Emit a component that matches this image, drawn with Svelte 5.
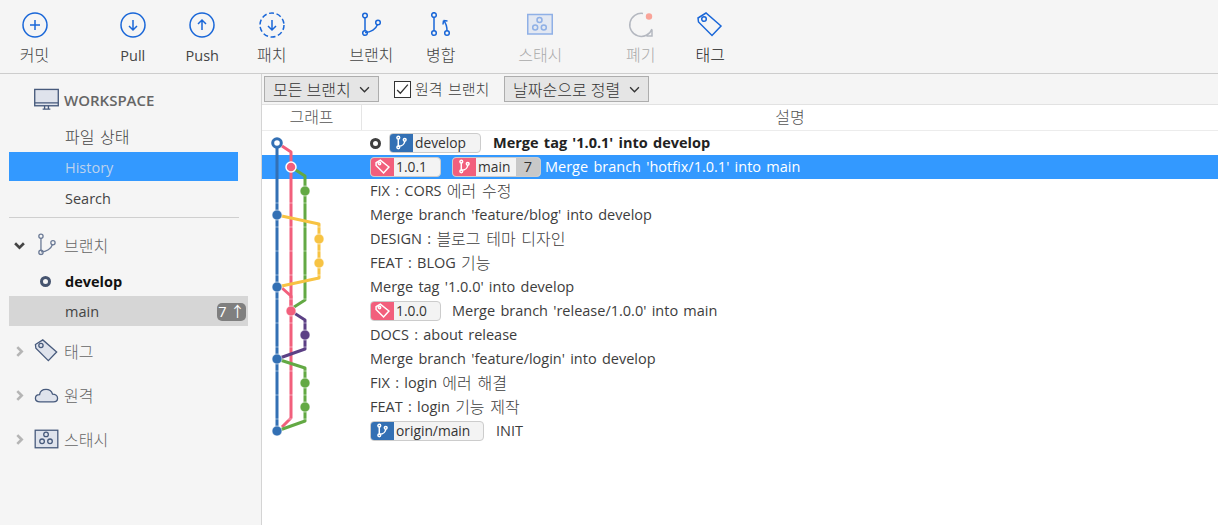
<script>
	// latin and hangul need different sizes to match the original font
	function runs(text) {
		return text.split(/([\uac00-\ud7a3]+(?: [\uac00-\ud7a3]+)*)/).filter(Boolean).map((s) => ({
			s,
			ko: /[\uac00-\ud7a3]/.test(s)
		}));
	}

	const commits = [
		{ head: true, text: "Merge tag '1.0.1' into develop", refs: [{ kind: 'branch', color: 'blue', name: 'develop', width: 92, after: 12 }] },
		{ selected: true, text: "Merge branch 'hotfix/1.0.1' into main", refs: [
			{ kind: 'tag', color: 'red', name: '1.0.1', width: 71, after: 11 },
			{ kind: 'branch', color: 'red', name: 'main', width: 89, count: 7, after: 4 }
		] },
		{ text: 'FIX : CORS 에러 수정' },
		{ text: "Merge branch 'feature/blog' into develop" },
		{ text: 'DESIGN : 블로그 테마 디자인' },
		{ text: 'FEAT : BLOG 기능' },
		{ text: "Merge tag '1.0.0' into develop" },
		{ text: "Merge branch 'release/1.0.0' into main", refs: [{ kind: 'tag', color: 'red', name: '1.0.0', width: 71, after: 11 }] },
		{ text: 'DOCS : about release' },
		{ text: "Merge branch 'feature/login' into develop" },
		{ text: 'FIX : login 에러 해결' },
		{ text: 'FEAT : login 기능 제작' },
		{ text: 'INIT', refs: [{ kind: 'branch', color: 'blue', name: 'origin/main', width: 114, after: 12 }] }
	];

	const lines = [
		{ color: '#3370b4', d: 'M15 12V300' },
		{ color: '#f25f7c', d: 'M20 15L29 21V287L20 296' },
		{ color: '#f25f7c', d: 'M20 157L29 165V180' },
		{ color: '#63a944', d: 'M29 36L43 45V169L29 178' },
		{ color: '#f7c343', d: 'M15 84L57 93V147L15 156' },
		{ color: '#5c4085', d: 'M29 180L43 189V218L15 228' },
		{ color: '#63a944', d: 'M15 228L43 237V290L15 300' }
	];

	const dots = [
		{ x: 29, y: 36, color: '#f25f7c', ring: true },
		{ x: 43, y: 60, color: '#63a944' },
		{ x: 15, y: 84, color: '#3370b4' },
		{ x: 57, y: 108, color: '#f7c343' },
		{ x: 57, y: 132, color: '#f7c343' },
		{ x: 15, y: 156, color: '#3370b4' },
		{ x: 29, y: 180, color: '#f25f7c' },
		{ x: 43, y: 204, color: '#5c4085' },
		{ x: 15, y: 228, color: '#3370b4' },
		{ x: 43, y: 252, color: '#63a944' },
		{ x: 43, y: 276, color: '#63a944' },
		{ x: 15, y: 300, color: '#3370b4' }
	];

	const ticks = [72, 96, 120, 144, 168, 192, 216, 240, 264, 288];
</script>

{#snippet t(text)}{#each runs(text) as run}{#if run.ko}<span class="ko">{run.s}</span>{:else}{run.s}{/if}{/each}{/snippet}

{#snippet branchIcon()}
	<path d="M7 5.5V19M7 20.5C13 20.5 18 17 19.5 12.5" />
	<circle cx="7" cy="3.5" r="2.3" />
	<circle cx="7" cy="21" r="2.3" />
	<circle cx="20" cy="10.5" r="2.3" />
{/snippet}

{#snippet tagIcon()}
	<path d="M1 6L9 1L24 14L15 23.5L1.5 10Z" />
	<circle cx="7" cy="7" r="2.3" />
{/snippet}

{#snippet stashDots()}
	<circle cx="12.5" cy="8" r="2.5" />
	<circle cx="8.2" cy="15.5" r="2.5" />
	<circle cx="16.8" cy="15.5" r="2.5" />
{/snippet}

{#snippet tinyBranch()}
	<svg class="mini" viewBox="0 0 14 14">
		<path d="M4 3V11M4 10.5C8 10.5 10 8 10 5.5" />
		<circle cx="4" cy="2.5" r="1.3" />
		<circle cx="4" cy="11.5" r="1.3" />
		<circle cx="10" cy="4.5" r="1.3" />
	</svg>
{/snippet}

{#snippet tinyTag()}
	<svg class="mini" viewBox="0 0 14 14">
		<path d="M1 3.5L5 1L13 7.5L8 13L1 6Z" />
		<circle cx="4.2" cy="4.2" r="1.1" />
	</svg>
{/snippet}

<div class="app">
	<header class="toolbar">
		<button class="tool first">
			<svg viewBox="0 0 26 26"><circle cx="13" cy="13" r="12" /><path d="M13 8V18M8 13H18" /></svg>
			<span class="ko">커밋</span>
		</button>
		<button class="tool group">
			<svg viewBox="0 0 26 26"><circle cx="13" cy="13" r="12" /><path d="M13 8V18M9 14L13 18L17 14" /></svg>
			<span>Pull</span>
		</button>
		<button class="tool">
			<svg viewBox="0 0 26 26"><circle cx="13" cy="13" r="12" /><path d="M13 8V18M9 12L13 8L17 12" /></svg>
			<span>Push</span>
		</button>
		<button class="tool">
			<svg viewBox="0 0 26 26"><circle cx="13" cy="13" r="12" stroke-dasharray="5 2.6" /><path d="M13 8V18M9 14L13 18L17 14" /></svg>
			<span class="ko">패치</span>
		</button>
		<button class="tool vcs">
			<svg viewBox="0 0 26 26">{@render branchIcon()}</svg>
			<span class="ko">브랜치</span>
		</button>
		<button class="tool">
			<svg viewBox="0 0 26 26">
				<path d="M6 5V19M19 19C19 14 18 11 15.5 8.5M15.5 8.5L15 12.5M15.5 8.5L19.5 9" />
				<circle cx="6" cy="3" r="2.3" /><circle cx="6" cy="21" r="2.3" /><circle cx="19" cy="21" r="2.3" />
			</svg>
			<span class="ko">병합</span>
		</button>
		<button class="tool stash off">
			<svg viewBox="0 0 26 26"><rect x="0.75" y="2.5" width="24.5" height="19.5" class="fill" />{@render stashDots()}</svg>
			<span class="ko">스태시</span>
		</button>
		<button class="tool discard off">
			<svg viewBox="0 0 26 26" class="grey"><path d="M15 1.5A11.5 11.5 0 1 0 24 17M24 18V24H18.5" /><circle class="red" cx="21" cy="4.5" r="3.2" /></svg>
			<span class="ko">폐기</span>
		</button>
		<button class="tool">
			<svg viewBox="0 0 26 26">{@render tagIcon()}</svg>
			<span class="ko dark">태그</span>
		</button>
	</header>

	<div class="body">
		<aside class="sidebar">
			<div class="section workspace">
				<svg class="icon" viewBox="0 0 26 24">
					<rect x="0.75" y="1" width="24.5" height="17" />
					<path d="M1 15H25M9 21.5H17M11 18V21M15 18V21" />
				</svg>
				<span>WORKSPACE</span>
			</div>
			<div class="item">{@render t('파일 상태')}</div>
			<div class="item active">History</div>
			<div class="item search">Search</div>
			<hr />

			<div class="section tree">
				<svg class="chev" viewBox="0 0 10 10"><path d="M1 3L5 7L9 3" /></svg>
				<svg class="icon plain" viewBox="0 0 26 26">{@render branchIcon()}</svg>
				<span class="ko">브랜치</span>
			</div>
			<div class="item current">
				<i class="head small"></i>
				develop
			</div>
			<div class="item checked">
				main
				<b class="ahead">7 ↑</b>
			</div>

			<div class="section tree">
				<svg class="chev shut" viewBox="0 0 10 10"><path d="M3 1L7 5L3 9" /></svg>
				<svg class="icon" viewBox="0 0 26 26">{@render tagIcon()}</svg>
				<span class="ko">태그</span>
			</div>
			<div class="section tree">
				<svg class="chev shut" viewBox="0 0 10 10"><path d="M3 1L7 5L3 9" /></svg>
				<svg class="icon" viewBox="0 0 26 26"><path d="M6 20.5C2.5 20.5 1 18.5 1 16.5C1 14 3 12.5 5.5 12.5C6 9 9 7 12.5 7C16 7 18.5 9 19.5 12C22.5 12 25 14 25 16.5C25 19 23 20.5 20.5 20.5Z" /></svg>
				<span class="ko">원격</span>
			</div>
			<div class="section tree">
				<svg class="chev shut" viewBox="0 0 10 10"><path d="M3 1L7 5L3 9" /></svg>
				<svg class="icon" viewBox="0 0 26 26"><rect x="0.75" y="3.5" width="24.5" height="19" />{@render stashDots()}</svg>
				<span class="ko">스태시</span>
			</div>
		</aside>

		<main class="content">
			<div class="filters">
				<button class="select all"><span>{@render t('모든 브랜치')}</span><svg viewBox="0 0 10 6"><path d="M1 1L5 5L9 1" /></svg></button>
				<label class="remote">
					<span class="box"><svg viewBox="0 0 14 14"><path d="M2 7.5L5 10.5L12 2.5" /></svg></span>
					{@render t('원격 브랜치')}
				</label>
				<button class="select sort"><span>{@render t('날짜순으로 정렬')}</span><svg viewBox="0 0 10 6"><path d="M1 1L5 5L9 1" /></svg></button>
			</div>

			<div class="columns">
				<div class="col-graph">{@render t('그래프')}</div>
				<div class="col-desc">{@render t('설명')}</div>
			</div>

			<div class="history">
				<svg class="graph" width="100" height="312" viewBox="0 0 100 312">
					{#each lines as line}
						<path d={line.d} stroke={line.color} />
					{/each}
					{#each ticks as y}
						<rect x="10" y={y - 0.5} width="52" height="1" fill="#fff" opacity="0.45" />
					{/each}
					<circle cx="15" cy="12" r="4.3" class="open" />
					{#each dots as dot}
						<circle cx={dot.x} cy={dot.y} r="5" fill={dot.color} class:ring={dot.ring} class="dot" />
					{/each}
				</svg>

				{#each commits as commit}
					<div class="row" class:selected={commit.selected} class:bold={commit.head}>
						<div class="desc">
							{#if commit.head}<i class="head"></i>{/if}
							{#each commit.refs ?? [] as ref}
								<span class="pill" style:width="{ref.width}px" style:margin-right="{ref.after}px">
									<span class="badge {ref.color}">
										{#if ref.kind === 'tag'}{@render tinyTag()}{:else}{@render tinyBranch()}{/if}
									</span>
									<span class="label">{ref.name}</span>
									{#if ref.count}<span class="count">{ref.count}</span>{/if}
								</span>
							{/each}
							<span class="msg">{@render t(commit.text)}</span>
						</div>
					</div>
				{/each}
			</div>
		</main>
	</div>
</div>

<style>
	:global(body) {
		margin: 0;
		background: #fff;
	}

	.app {
		height: 525px;
		display: flex;
		flex-direction: column;
		overflow: hidden;
		font-family: "Open Sans", "Noto Sans CJK KR", sans-serif;
		font-size: 14.5px;
		word-spacing: 1.5px;
		color: #3d3d3d;
	}

	.ko {
		font-size: 16px;
		font-weight: 300;
		line-height: 1;
		vertical-align: -1px;
	}

	.toolbar {
		height: 73px;
		flex: none;
		display: flex;
		background: #f5f5f5;
		border-bottom: 1px solid #cdcdcd;
	}

	.tool {
		width: 69.5px;
		padding: 12px 0 0;
		display: flex;
		flex-direction: column;
		align-items: center;
		background: none;
		border: 0;
		font: inherit;
		color: #444;
	}

	.tool.first {
		width: 69px;
	}

	.tool.group {
		margin-left: 29px;
	}

	.tool.vcs {
		margin-left: 30px;
	}

	.tool.stash {
		margin-left: 30px;
	}

	.tool.discard {
		margin-left: 31px;
	}

	.tool svg {
		width: 26px;
		height: 26px;
		fill: none;
		stroke: #1a67d8;
		stroke-width: 1.5;
	}

	.tool span {
		margin-top: 8px;
		line-height: 20px;
	}

	.tool .ko {
		margin-top: 7px;
	}

	.tool .dark {
		color: #222;
	}

	.tool.off svg {
		stroke: #8fb0e6;
	}

	.tool.off .fill {
		fill: #e3e8f2;
	}

	.tool.off span {
		color: #aaa;
	}

	.tool.off svg.grey {
		stroke: #b4b8c0;
	}

	.tool.off svg .red {
		fill: #f9a499;
		stroke: none;
	}

	.body {
		flex: 1;
		display: flex;
		min-height: 0;
	}

	.sidebar {
		width: 262px;
		flex: none;
		padding: 14px 0 0 9px;
		box-sizing: border-box;
		background: #f5f5f5;
		border-right: 1px solid #d4d4d4;
	}

	.section {
		display: flex;
		align-items: center;
		height: 24px;
		color: #666;
	}

	.section span {
		margin-left: 5px;
	}

	.section .ko {
		margin-top: 2px;
	}

	.workspace {
		padding-left: 25px;
		margin-bottom: 10px;
		font-weight: 600;
		font-size: 15px;
		word-spacing: 0;
	}

	.icon {
		width: 25px;
		height: 24px;
		flex: none;
		fill: #dfe3ec;
		stroke: #475a7c;
		stroke-width: 1.4;
	}

	.icon.plain {
		fill: none;
		stroke: #6b7a96;
	}

	.tree {
		height: 26px;
	}

	.tree + .tree {
		margin-top: 18px;
	}

	.chev {
		width: 11px;
		height: 11px;
		margin: 0 9px 0 5px;
		flex: none;
		fill: none;
		stroke: #444;
		stroke-width: 2.4;
	}

	.chev.shut {
		stroke: #b5b5b5;
	}

	.item {
		position: relative;
		height: 30px;
		width: 229px;
		box-sizing: border-box;
		padding-left: 56px;
		line-height: 30px;
		color: #444;
	}

	.item.active {
		height: 29px;
		line-height: 31px;
		background: #3399ff;
		color: #bcd2ee;
	}

	.item.search {
		margin-top: 3px;
	}

	hr {
		width: 230px;
		margin: 3px 0 14px;
		border: 0;
		border-top: 1px solid #cfcfcf;
	}

	.item.current {
		height: 29px;
		margin-top: 9px;
		color: #111;
		font-weight: 700;
	}

	.item.current .head {
		position: absolute;
		left: 31px;
		top: 9px;
		margin: 0;
	}

	.item.checked {
		width: 239px;
		line-height: 32px;
		background: #d6d6d6;
		margin-bottom: 12px;
	}

	.ahead {
		position: absolute;
		right: 2px;
		top: 7px;
		width: 29px;
		height: 18px;
		line-height: 18px;
		text-align: center;
		border-radius: 5px;
		background: #7f7f7f;
		color: #fff;
		font-weight: 400;
		word-spacing: 0;
	}

	.head {
		display: inline-block;
		width: 11px;
		height: 11px;
		box-sizing: border-box;
		margin-right: 8px;
		border: 3px solid #3f3f3f;
		border-radius: 50%;
	}

	.head.small {
		border-color: #46546f;
	}

	.content {
		flex: 1;
		min-width: 0;
		background: #fff;
	}

	.filters {
		height: 31px;
		display: flex;
		align-items: center;
		gap: 15px;
		padding-left: 2px;
		background: #f5f5f5;
		border-bottom: 1px solid #e2e2e2;
		box-sizing: border-box;
	}

	.select {
		height: 26px;
		padding: 0 8px;
		box-sizing: border-box;
		display: flex;
		align-items: center;
		justify-content: space-between;
		white-space: nowrap;
		background: #e5e5e5;
		border: 1px solid #adadad;
		font: inherit;
		color: #333;
	}

	.select svg {
		width: 11px;
		height: 7px;
		fill: none;
		stroke: #333;
		stroke-width: 1.2;
	}

	.select.all {
		width: 115px;
	}

	.select.sort {
		width: 145px;
	}

	.remote {
		display: flex;
		align-items: center;
		gap: 4px;
		width: 95px;
		white-space: nowrap;
	}

	.remote .ko {
		font-size: 15px;
	}

	.box {
		width: 15px;
		height: 15px;
		flex: none;
		border: 1px solid #333;
		background: #fff;
	}

	.box svg {
		display: block;
		width: 15px;
		height: 15px;
		fill: none;
		stroke: #333;
		stroke-width: 1.2;
	}

	.columns {
		height: 26px;
		display: flex;
		line-height: 23px;
		text-align: center;
		box-sizing: border-box;
		border-bottom: 1px solid #ececec;
		color: #555;
	}

	.col-graph {
		width: 99px;
		border-right: 1px solid #e5e5e5;
	}

	.col-desc {
		flex: 1;
	}

	.history {
		position: relative;
	}

	.graph {
		position: absolute;
		left: 0;
		top: 0;
		z-index: 1;
		pointer-events: none;
	}

	.graph path {
		fill: none;
		stroke-width: 3;
		stroke-linejoin: round;
	}

	.graph .open {
		fill: #fff;
		stroke: #3370b4;
		stroke-width: 3;
	}

	.graph .dot {
		stroke: #fff;
		stroke-width: 1;
		stroke-opacity: 0.6;
	}

	.graph .dot.ring {
		stroke-opacity: 1;
		stroke-width: 1.5;
	}

	.row {
		height: 24px;
		padding-left: 108px;
		display: flex;
		align-items: center;
		white-space: nowrap;
	}

	.row.selected {
		background: #3399ff;
		color: #fff;
	}

	.row.bold .msg {
		font-weight: 700;
		color: #222;
	}

	.desc {
		display: flex;
		align-items: center;
	}

	.msg {
		margin-bottom: 2px;
	}

	.pill {
		display: flex;
		align-items: center;
		height: 20px;
		margin-bottom: 1px;
		box-sizing: border-box;
		overflow: hidden;
		background: #f3f3f3;
		border: 1px solid #ccc;
		border-radius: 4px;
		color: #333;
		word-spacing: 0;
	}

	.badge {
		width: 23px;
		height: 20px;
		flex: none;
		display: flex;
		align-items: center;
		justify-content: center;
	}

	.badge.blue {
		background: #3370b4;
	}

	.badge.red {
		background: #f25f7c;
	}

	.mini {
		width: 15px;
		height: 15px;
		fill: none;
		stroke: #fff;
		stroke-width: 1.4;
	}

	.label {
		flex: 1;
		padding-left: 2px;
		padding-bottom: 1px;
		font-size: 13.8px;
	}

	.count {
		width: 24px;
		height: 20px;
		line-height: 20px;
		text-align: center;
		background: #c8c8c8;
	}
</style>
